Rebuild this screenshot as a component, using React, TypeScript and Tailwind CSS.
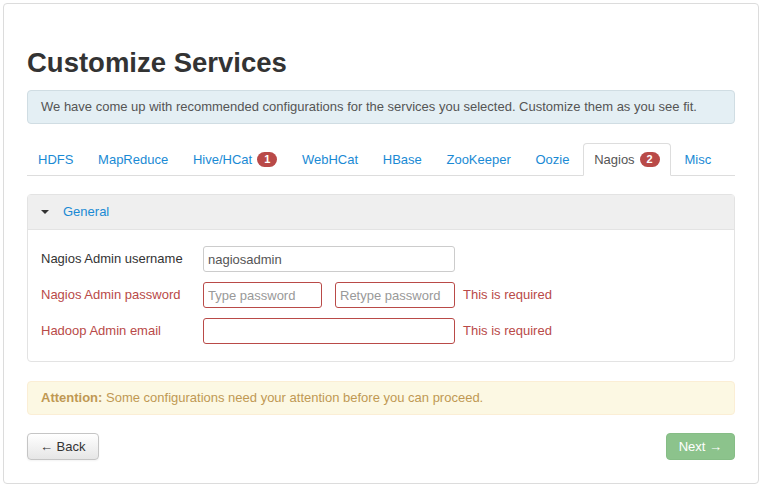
import React from "react";

const tabs = [
  { name: "HDFS" },
  { name: "MapReduce" },
  { name: "Hive/HCat", badge: 1 },
  { name: "WebHCat" },
  { name: "HBase" },
  { name: "ZooKeeper" },
  { name: "Oozie" },
  { name: "Nagios", badge: 2, active: true },
  { name: "Misc" },
];

const Badge = ({ n }: { n: number }) => (
  <span className="ml-[5px] inline-block rounded-[9px] bg-[#b94a48] px-[7px] text-[11px] font-bold leading-[15px] text-white">
    {n}
  </span>
);

const inputBase =
  "h-[26px] rounded-[3px] border bg-white px-[4px] text-[13px] text-[#555] outline-none placeholder:text-[#999]";

export default function App() {
  return (
    <div
      className="h-[488px] w-[763px] bg-white p-[3px] text-[13px] text-[#333]"
      style={{ fontFamily: '"Liberation Sans", Arial, sans-serif' }}
    >
      <div className="h-[481px] w-[756px] rounded-[4px] border border-[#dcdcdc] px-[23px] pt-[39px]">
        <h2 className="mb-[7px] text-[27.5px] font-bold leading-[40px] text-[#333]">
          Customize Services
        </h2>

        <div className="mb-[19px] rounded-[4px] border border-[#d0dde3] bg-[#e4eff4] px-[13px] py-[7px] leading-[18px] text-[#555]">
          We have come up with recommended configurations for the services you
          selected. Customize them as you see fit.
        </div>

        {/* tabs */}
        <ul className="mb-[18px] flex border-b border-[#ddd]">
          {tabs.map((t) => (
            <li key={t.name} className="-mb-px mr-[2.7px]">
              <div
                className={
                  t.active
                    ? "flex items-center rounded-t-[4px] border border-[#ddd] border-b-white bg-white px-[10px] py-[7px] leading-[17px] text-[#555]"
                    : "flex items-center rounded-t-[4px] border border-transparent px-[10px] py-[7px] leading-[17px] text-[#1a8ad4]"
                }
              >
                {t.name}
                {t.badge && <Badge n={t.badge} />}
              </div>
            </li>
          ))}
        </ul>

        {/* General panel */}
        <div className="mb-[19px] rounded-[4px] border border-[#e3e3e3]">
          <div className="flex h-[35px] items-center border-b border-[#e3e3e3] bg-[#efefef] px-[13px]">
            <span className="mr-[14px] h-0 w-0 border-x-[4px] border-t-[4px] border-x-transparent border-t-[#333]" />
            <span className="text-[#1a8ad4]">General</span>
          </div>
          <div className="flex flex-col gap-[10px] px-[13px] pb-[17px] pt-[16px]">
            <div className="flex items-center">
              <label className="w-[162px]">Nagios Admin username</label>
              <input
                className={`${inputBase} w-[252px] border-[#ccc]`}
                defaultValue="nagiosadmin"
              />
            </div>
            <div className="flex items-center">
              <label className="w-[162px] text-[#b94a48]">
                Nagios Admin password
              </label>
              <input
                className={`${inputBase} w-[119px] border-[#b94a48]`}
                placeholder="Type password"
              />
              <input
                className={`${inputBase} ml-[13px] w-[120px] border-[#b94a48]`}
                placeholder="Retype password"
              />
              <span className="ml-[8px] text-[#b94a48]">This is required</span>
            </div>
            <div className="flex items-center">
              <label className="w-[162px] text-[#b94a48]">
                Hadoop Admin email
              </label>
              <input className={`${inputBase} w-[252px] border-[#b94a48]`} />
              <span className="ml-[8px] text-[#b94a48]">This is required</span>
            </div>
          </div>
        </div>

        <div className="mb-[18px] rounded-[4px] border border-[#fbeed5] bg-[#fcf8e3] px-[13px] py-[7px] leading-[18px] text-[#c09853]">
          <b>Attention:</b> Some configurations need your attention before you
          can proceed.
        </div>

        <div className="flex justify-between">
          <button className="h-[27px] rounded-[4px] border border-[#c5c5c5] bg-gradient-to-b from-white to-[#e6e6e6] px-[12px] text-[13px] leading-[18px] text-[#333] shadow-[inset_0_1px_0_rgba(255,255,255,.2),0_1px_2px_rgba(0,0,0,.05)]">
            ← Back
          </button>
          <button className="h-[27px] rounded-[4px] border border-[#86bd86] bg-[#8cc38c] px-[12px] text-[13px] leading-[18px] text-white">
            Next →
          </button>
        </div>
      </div>
    </div>
  );
}
